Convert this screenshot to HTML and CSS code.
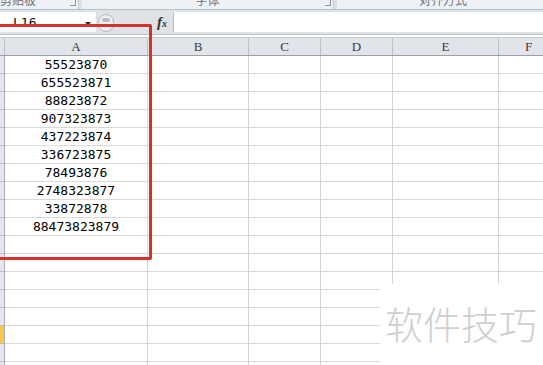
FILE: index.html
```html
<!DOCTYPE html>
<html lang="zh-CN">
<head>
    <meta charset="UTF-8">
    <title>Excel</title>
    <link rel="stylesheet" href="styles.css">
</head>
<body>
    <div class="app">
        <!-- ribbon group labels (cut off at top) -->
        <div class="ribbon">
            <div class="grp g1"><span class="glabel">剪贴板</span><span class="launch"></span></div>
            <div class="grp g2"><span class="glabel">字体</span><span class="launch"></span></div>
            <div class="grp g3"><span class="glabel">对齐方式</span></div>
        </div>

        <!-- formula bar -->
        <div class="fbar">
            <div class="namebox">
                <span class="nbtext">L16</span>
                <span class="nbarrow"></span>
            </div>
            <div class="mid">
                <span class="grip"><span class="dot"></span></span>
                <span class="fx">f<sub>x</sub></span>
            </div>
            <div class="finput"></div>
        </div>

        <!-- column headers -->
        <div class="colheads">
            <div class="ch rh"></div>
            <div class="ch ca">A</div>
            <div class="ch cb">B</div>
            <div class="ch cc">C</div>
            <div class="ch cd">D</div>
            <div class="ch ce">E</div>
            <div class="ch cf">F</div>
        </div>

        <!-- cells -->
        <div class="grid">
            <div class="col rh"><div class="sel"></div></div>
            <div class="col ca">
                <div class="cell">55523870</div>
                <div class="cell">655523871</div>
                <div class="cell">88823872</div>
                <div class="cell">907323873</div>
                <div class="cell">437223874</div>
                <div class="cell">336723875</div>
                <div class="cell">78493876</div>
                <div class="cell">2748323877</div>
                <div class="cell">33872878</div>
                <div class="cell">88473823879</div>
            </div>
            <div class="col cb"></div>
            <div class="col cc"></div>
            <div class="col cd"></div>
            <div class="col ce"></div>
            <div class="col cf"></div>
        </div>

        <!-- annotation + watermark on top -->
        <div class="redbox"></div>
        <div class="watermark">软件技巧</div>
    </div>
</body>
</html>
```

FILE: styles.css
```css
html, body {
    margin: 0;
    padding: 0;
}
body {
    background: #ffffff;
    font-family: 'Liberation Sans', sans-serif;
    overflow: hidden;
}
.app {
    position: relative;
    width: 543px;
    height: 365px;
    overflow: hidden;
}

/* Ribbon strip */
.ribbon {
    display: flex;
    height: 9px;
    background: #dde2e8;
    border-bottom: 1px solid #b9bfc7;
    overflow: hidden;
}
.grp {
    display: flex;
    justify-content: center;
    flex-shrink: 0;
    position: relative;
    background: #eef1f5;
    border-right: 1px solid #c3c8cf;
    margin-right: 3px;
    overflow: hidden;
}
.g1 {
    width: 78px;
    justify-content: flex-start;
}
.g2 {
    width: 251px;
}
.g3 {
    width: 212px;
}
.glabel {
    font-family: 'Noto Sans CJK SC', sans-serif;
    font-size: 12px;
    line-height: 12px;
    color: #6c7480;
    margin-top: -6px;
}
.launch {
    position: absolute;
    right: 2px;
    top: 0;
    width: 5px;
    height: 5px;
    border-right: 1px solid #8d949e;
    border-bottom: 1px solid #8d949e;
}

/* Formula bar */
.fbar {
    display: flex;
    height: 22px;
    background: #dfe3e8;
    border-bottom: 1px solid #b8bec6;
    padding-top: 2px;
}
.namebox {
    width: 96px;
    height: 20px;
    background: #ffffff;
    display: flex;
    align-items: center;
    justify-content: space-between;
    box-sizing: border-box;
    padding: 1px 5px 0 13px;
}
.nbtext {
    font-family: 'DejaVu Sans Mono', monospace;
    font-size: 13px;
    color: #111;
}
.nbarrow {
    width: 0;
    height: 0;
    border-left: 3px solid transparent;
    border-right: 3px solid transparent;
    border-top: 4px solid #333;
    margin-top: 2px;
}
.mid {
    width: 77px;
    display: flex;
    align-items: center;
}
.grip {
    width: 16px;
    height: 18px;
    border-radius: 9px;
    background: #eceef1;
    border: 1px solid #b5bbc3;
    box-sizing: border-box;
    margin-left: 2px;
    display: flex;
    justify-content: center;
    padding-top: 3px;
}
.dot {
    width: 8px;
    height: 4px;
    border-radius: 3px;
    background: #b8bdc4;
}
.fx {
    margin-left: 43px;
    font-family: 'Liberation Serif', serif;
    font-style: italic;
    font-weight: bold;
    font-size: 15px;
    color: #333;
    line-height: 14px;
}
.fx sub {
    font-size: 10px;
    vertical-align: 0;
}
.finput {
    flex: 1;
    height: 20px;
    background: #ffffff;
    border-left: 1px solid #b8bec6;
}

/* Column header row */
.colheads {
    display: flex;
    height: 17px;
    margin-top: 2px;
    background: #e1e5ea;
    border-top: 1px solid #c6cbd1;
    border-bottom: 1px solid #9aa1aa;
}
.ch {
    flex-shrink: 0;
    box-sizing: border-box;
    border-right: 1px solid #bcc1c8;
    text-align: center;
    font-family: 'Liberation Serif', serif;
    font-size: 13px;
    line-height: 18px;
    color: #3a3a3a;
}
.rh { width: 5px; }
.ca { width: 143px; }
.cb { width: 101px; }
.cc { width: 72px; }
.cd { width: 72px; }
.ce { width: 106px; }
.cf { width: 60px; }

/* Cell area */
.grid {
    display: flex;
    height: 320px;
}
.col {
    flex-shrink: 0;
    box-sizing: border-box;
    border-right: 1px solid #d4d4d4;
    background: repeating-linear-gradient(to bottom, transparent 0, transparent 17px, #d9d9d9 17px, #d9d9d9 18px);
}
.col.rh {
    background: repeating-linear-gradient(to bottom, #e4e8ee 0, #e4e8ee 17px, #b7bdc5 17px, #b7bdc5 18px);
    border-right: 1px solid #a9afb8;
}
.sel {
    margin-top: 270px;
    height: 17px;
    background: #f6c84a;
}
.cell {
    height: 18px;
    line-height: 18px;
    text-align: center;
    font-family: 'DejaVu Sans Mono', monospace;
    font-size: 13px;
    color: #000;
}

/* Red annotation frame */
.redbox {
    position: absolute;
    left: -12px;
    top: 24px;
    width: 164px;
    height: 236px;
    box-sizing: border-box;
    border: 3px solid #d6312b;
    border-radius: 2px;
}

/* Watermark */
.watermark {
    position: absolute;
    left: 380px;
    top: 284px;
    right: 0;
    bottom: 0;
    background: #ffffff;
    font-family: 'Noto Sans CJK SC', sans-serif;
    font-size: 38px;
    font-weight: 300;
    color: #cfcfcf;
    padding: 17px 0 0 5px;
    line-height: 44px;
}
```
